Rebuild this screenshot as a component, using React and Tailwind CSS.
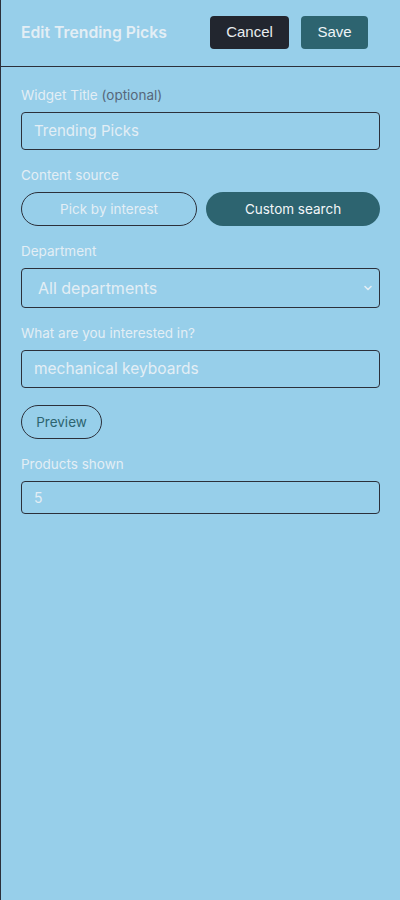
import React from "react";

const font = { fontFamily: "Inter, 'Noto Sans', sans-serif" };

export default function App() {
  return (
    <div
      className="min-h-[900px] w-[400px] bg-[#97cfea] border-l border-[#2b303b]"
      style={font}
    >
      <div className="flex items-center justify-between pl-5 pr-[32px] pt-4 pb-[17px] border-b border-[#2b303b]">
        <div className="text-[15.75px] font-semibold text-[#e3eef5]">Edit Trending Picks</div>
        <div className="flex gap-3">
          <button
            className="h-[33px] w-[79px] rounded-[4px] bg-[#22262f] text-[15px] text-[#e9edf0]"
            style={{ fontFamily: "'Liberation Sans', Arial, sans-serif" }}
          >
            Cancel
          </button>
          <button
            className="h-[33px] w-[67px] rounded-[4px] bg-[#2d6470] text-[15px] text-[#eef4f6]"
            style={{ fontFamily: "'Liberation Sans', Arial, sans-serif" }}
          >
            Save
          </button>
        </div>
      </div>
      <div className="flex flex-col gap-4 pl-5 pr-5 pt-[19px]">
        <div className="flex flex-col gap-2">
          <div className="text-[13.5px] leading-[18px] text-[#e3eef5]">
            Widget Title <span className="text-[#56677a]">(optional)</span>
          </div>
          <div className="flex h-[38px] items-center rounded-[4px] border border-[#2b303b] px-3 text-[15px] text-[#e3eef5]">
            Trending Picks
          </div>
        </div>
        <div className="flex flex-col gap-2">
          <div className="text-[13.5px] leading-[18px] text-[#e3eef5]">Content source</div>
          <div className="flex gap-[9px]">
            <button className="h-[34px] flex-1 rounded-full border border-[#2b303b] text-[13.5px] text-[#e3eef5]">
              Pick by interest
            </button>
            <button className="h-[34px] flex-1 rounded-full bg-[#2d6470] text-[13.5px] text-[#f2f6f8]">
              Custom search
            </button>
          </div>
        </div>
        <div className="flex flex-col gap-2">
          <div className="text-[13.5px] leading-[18px] text-[#e3eef5]">Department</div>
          <div className="flex h-10 items-center justify-between rounded-[4px] border border-[#2b303b] pl-4 pr-[6px] text-[16px] text-[#e3eef5]">
            <span>All departments</span>
            <svg width="10" height="10" viewBox="0 0 10 10" fill="none">
              <path d="M2 3.5 L5 6.5 L8 3.5" stroke="#e3eef5" strokeWidth="1.6" strokeLinecap="round" strokeLinejoin="round" />
            </svg>
          </div>
        </div>
        <div className="flex flex-col gap-2">
          <div className="text-[13.5px] leading-[18px] text-[#e3eef5]">What are you interested in?</div>
          <div className="flex h-[38px] items-center rounded-[4px] border border-[#2b303b] px-3 text-[15.5px] text-[#e3eef5]">
            mechanical keyboards
          </div>
        </div>
        <div className="pt-px">
          <button className="h-[34px] w-[81px] rounded-full border border-[#2b303b] text-[13.5px] text-[#2d6470]">
            Preview
          </button>
        </div>
        <div className="flex flex-col gap-2">
          <div className="text-[13.5px] leading-[18px] text-[#e3eef5]">Products shown</div>
          <div className="flex h-[33px] items-center rounded-[4px] border border-[#2b303b] px-3 text-[14px] text-[#e3eef5]">
            5
          </div>
        </div>
      </div>
    </div>
  );
}
